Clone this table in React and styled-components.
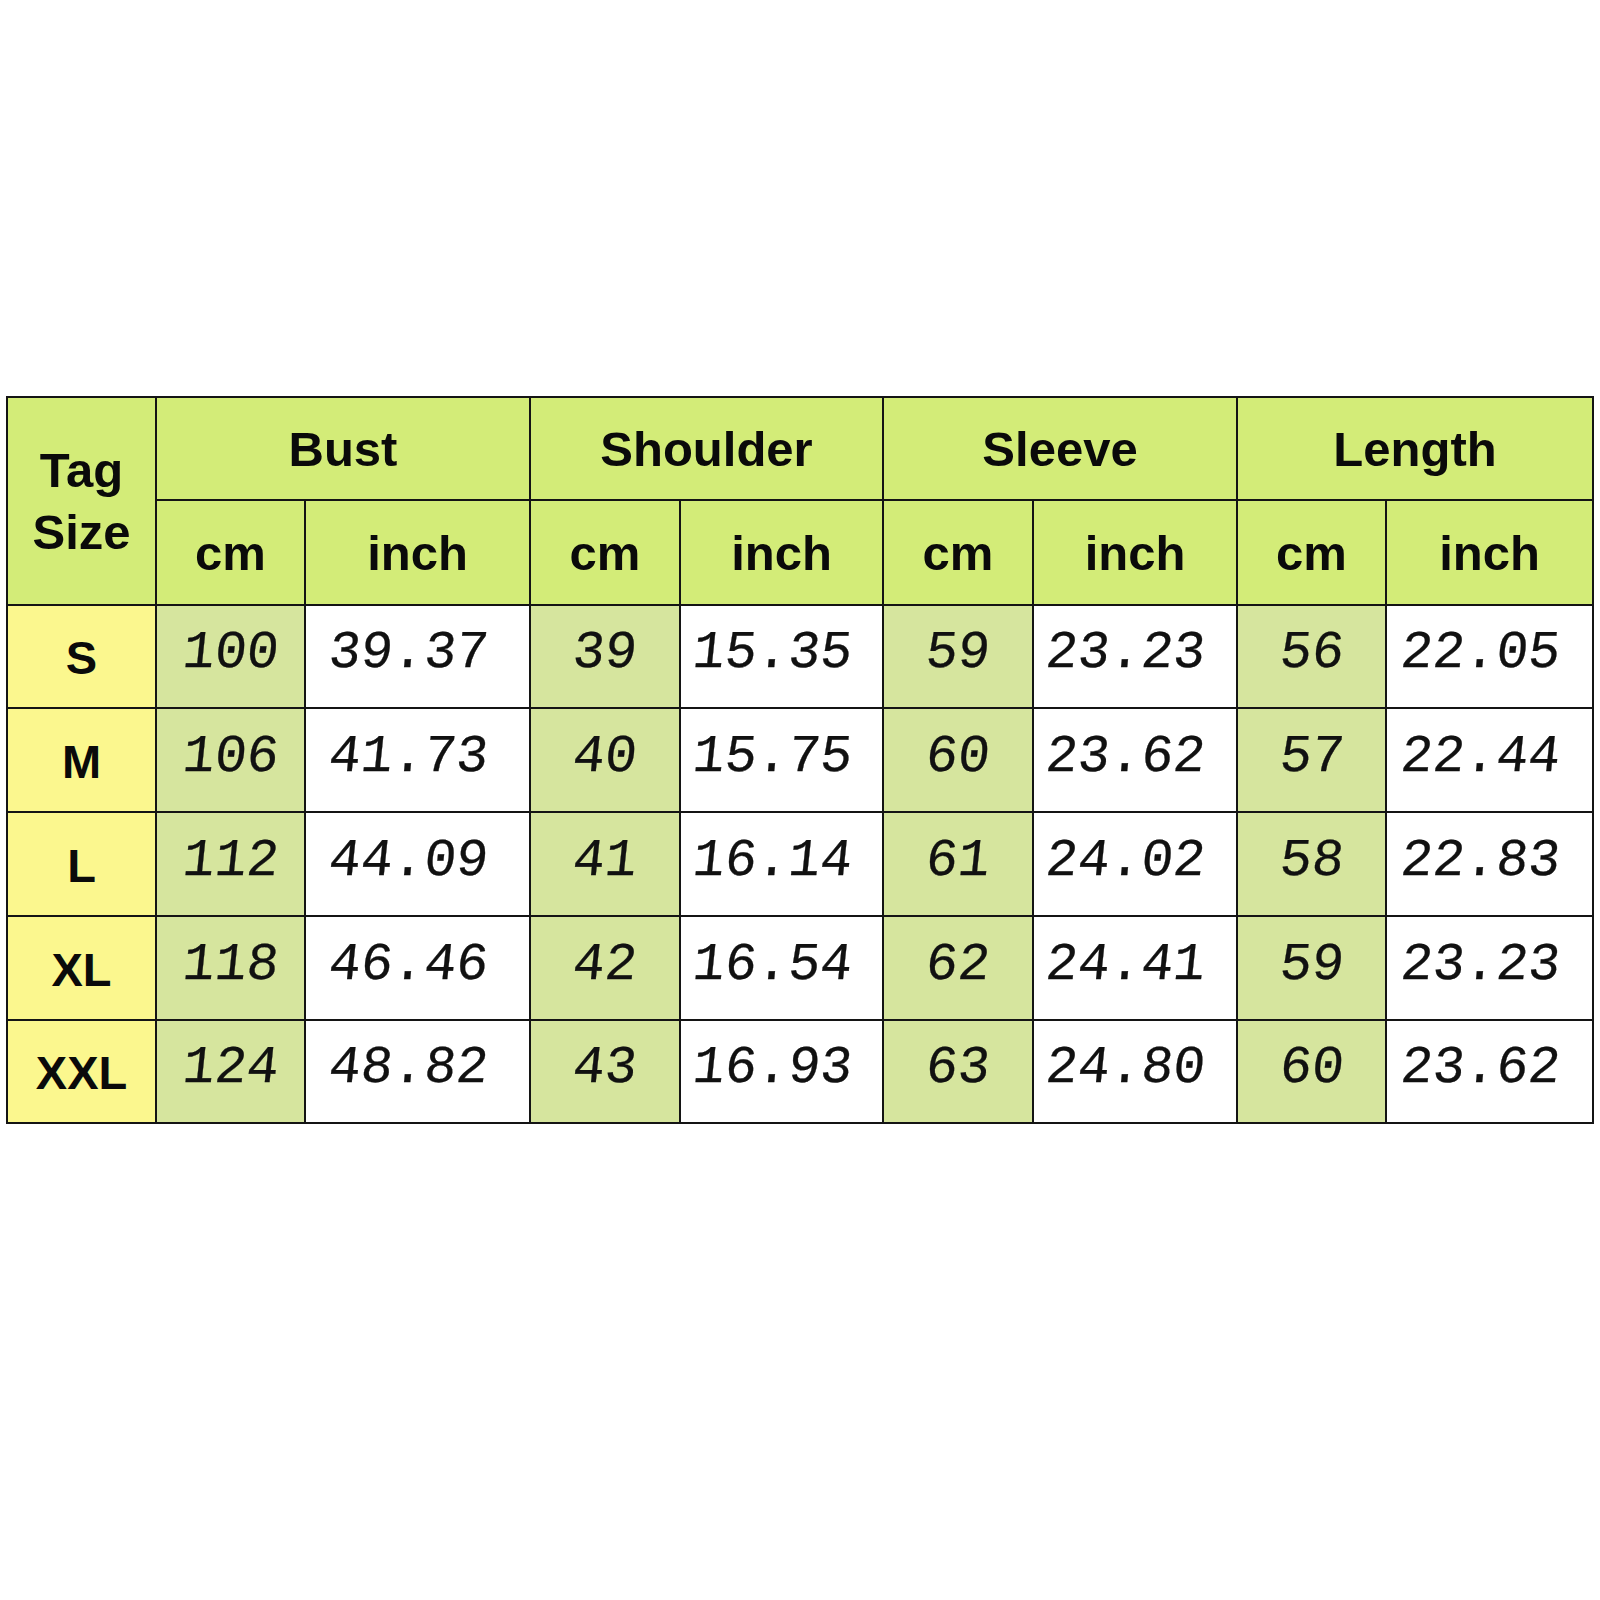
import React from "react";
import styled, { createGlobalStyle } from "styled-components";

const Global = createGlobalStyle`
  html, body { margin: 0; padding: 0; background: #ffffff; }
  body { width: 1600px; height: 1600px; }
`;

const Page = styled.div`
  width: 1600px;
  height: 1600px;
  box-sizing: border-box;
  padding: 396px 0 0 6px;
  background: #ffffff;
`;

const Grid = styled.div`
  display: grid;
  grid-template-columns: 147px 147px 223px 148px 201px 148px 202px 147px 205px;
  grid-template-rows: 101px 103px 101px 102px 102px 102px 101px;
  gap: 2px;
  padding: 2px;
  width: max-content;
  background: #141414;
`;

const Cell = styled.div`
  display: flex;
  align-items: center;
  justify-content: center;
  box-sizing: border-box;
  background: ${(p) => p.$bg};
  grid-column: ${(p) => p.$col || "auto"};
  grid-row: ${(p) => p.$row || "auto"};
`;

const HeadText = styled.span`
  font-family: "Liberation Sans", Arial, sans-serif;
  font-weight: 700;
  font-size: 49px;
  line-height: 62px;
  color: #0a0a0a;
  text-align: center;
`;

const SizeText = styled(HeadText)`
  font-size: 47px;
  line-height: 1;
  padding-top: 2px;
`;

const NumCell = styled(Cell)`
  padding-right: ${(p) => (p.$inch ? "18px" : "0")};
  padding-bottom: 6px;
`;

const NumText = styled.span`
  display: inline-block;
  font-family: "Liberation Mono", "Courier New", monospace;
  font-size: 53px;
  font-style: normal;
  line-height: 1;
  color: #111111;
  -webkit-text-stroke: 0.3px #111111;
  transform: skewX(-6deg);
`;

const GREEN = "#d3ec78";
const YELLOW = "#fbf78e";
const CMBG = "#d6e59e";
const WHITE = "#ffffff";

const groups = ["Bust", "Shoulder", "Sleeve", "Length"];
const rows = [
  ["S", "100", "39.37", "39", "15.35", "59", "23.23", "56", "22.05"],
  ["M", "106", "41.73", "40", "15.75", "60", "23.62", "57", "22.44"],
  ["L", "112", "44.09", "41", "16.14", "61", "24.02", "58", "22.83"],
  ["XL", "118", "46.46", "42", "16.54", "62", "24.41", "59", "23.23"],
  ["XXL", "124", "48.82", "43", "16.93", "63", "24.80", "60", "23.62"],
];

export default function App() {
  return (
    <>
      <Global />
      <Page>
        <Grid>
          <Cell $bg={GREEN} $row="1 / span 2" $col="1">
            <HeadText>
              Tag
              <br />
              Size
            </HeadText>
          </Cell>
          {groups.map((g, i) => (
            <Cell key={g} $bg={GREEN} $row="1" $col={`${2 + i * 2} / span 2`}>
              <HeadText>{g}</HeadText>
            </Cell>
          ))}
          {groups.map((g, i) => (
            <React.Fragment key={g + "u"}>
              <Cell $bg={GREEN} $row="2" $col={`${2 + i * 2}`}>
                <HeadText>cm</HeadText>
              </Cell>
              <Cell $bg={GREEN} $row="2" $col={`${3 + i * 2}`}>
                <HeadText>inch</HeadText>
              </Cell>
            </React.Fragment>
          ))}
          {rows.map((r) => (
            <React.Fragment key={r[0]}>
              <Cell $bg={YELLOW}>
                <SizeText>{r[0]}</SizeText>
              </Cell>
              {r.slice(1).map((v, j) => (
                <NumCell key={j} $bg={j % 2 === 0 ? CMBG : WHITE} $inch={j % 2 === 1}>
                  <NumText>{v}</NumText>
                </NumCell>
              ))}
            </React.Fragment>
          ))}
        </Grid>
      </Page>
    </>
  );
}
